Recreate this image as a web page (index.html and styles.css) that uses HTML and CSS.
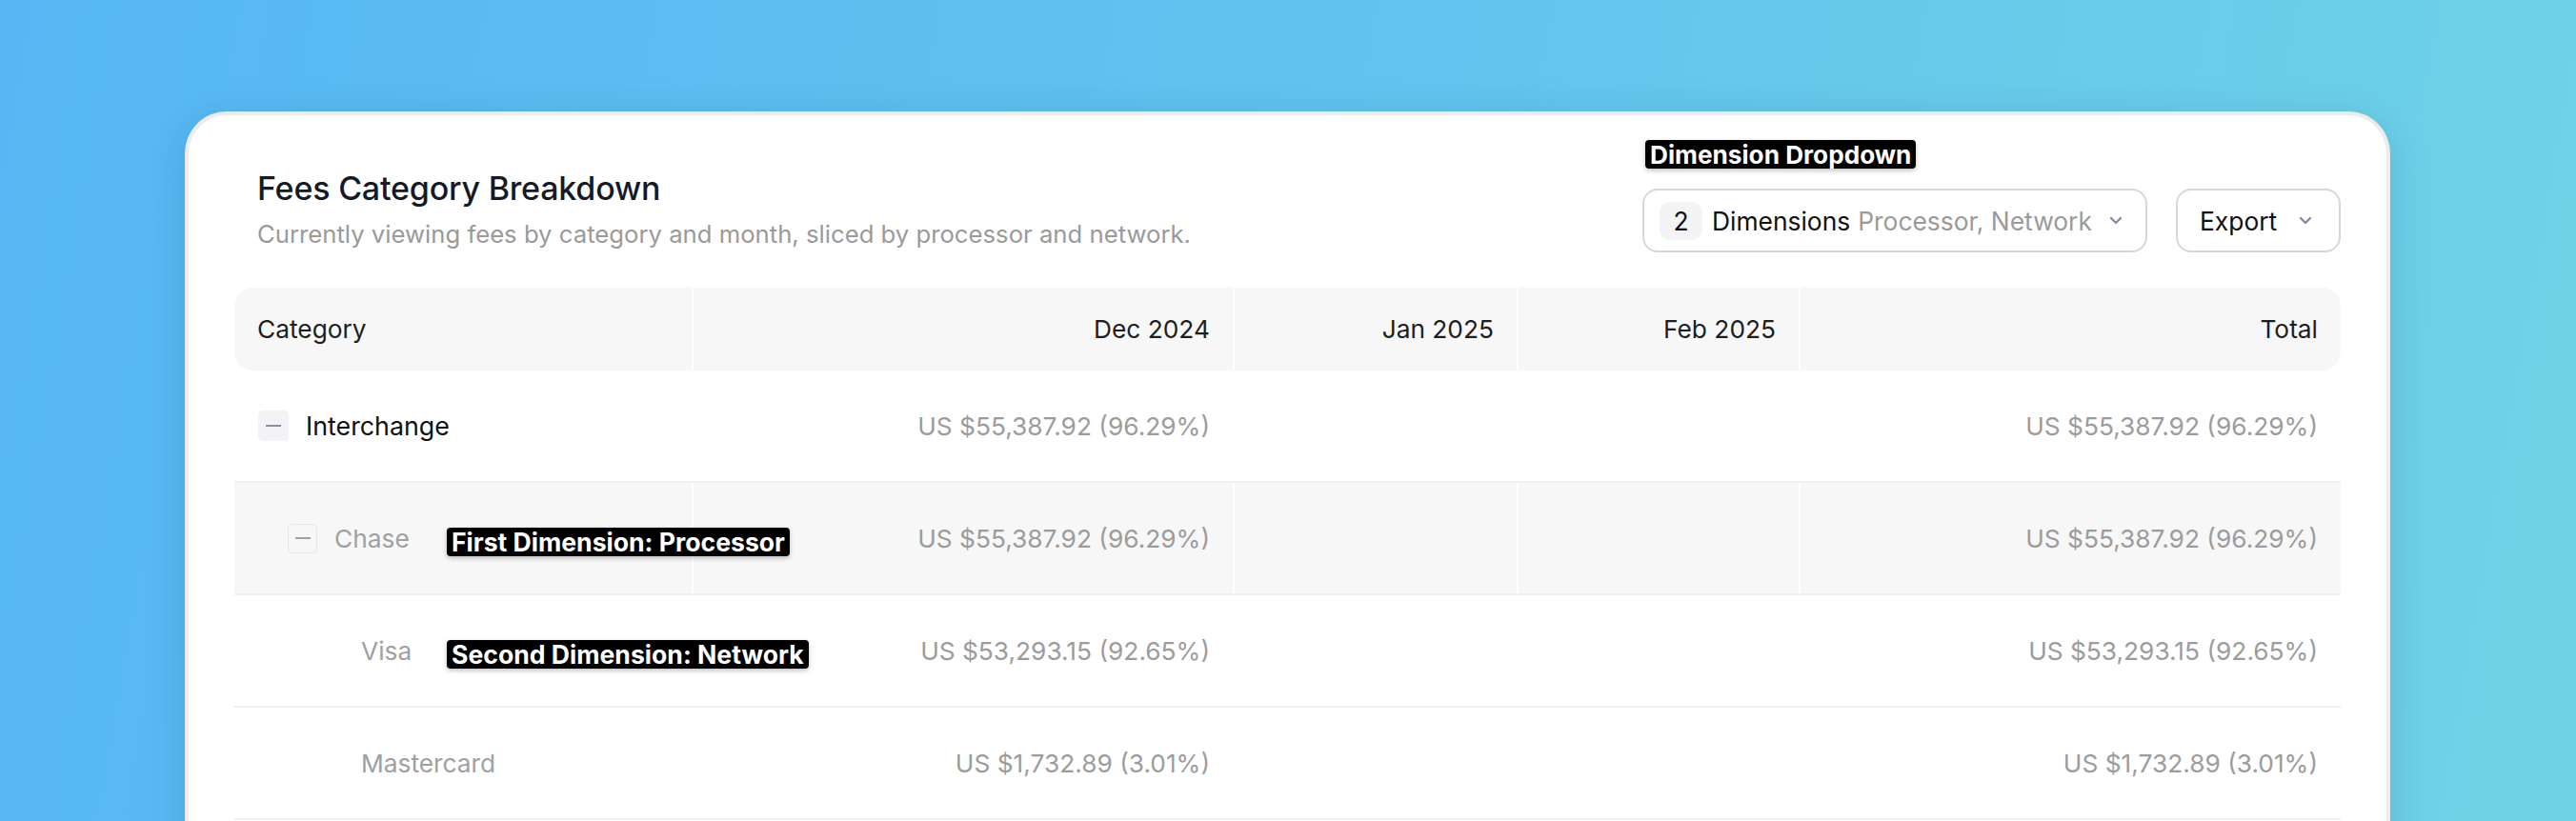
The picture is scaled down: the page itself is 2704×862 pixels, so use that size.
FILE: index.html
```html
<!DOCTYPE html>
<html lang="en">
<head>
<meta charset="utf-8">
<title>Fees Category Breakdown</title>
<link rel="stylesheet" href="styles.css">
</head>
<body>
<div class="stage">
  <section class="card">
    <header class="card-head">
      <div class="titles">
        <h1 class="title">Fees Category Breakdown</h1>
        <p class="subtitle">Currently viewing fees by category and month, sliced by processor and network.</p>
      </div>
      <div class="controls">
        <div class="dropdown-wrap">
          <span class="tag tag-dropdown">Dimension Dropdown</span>
          <button class="btn btn-dims">
            <span class="count">2</span>
            <span class="dims-label">Dimensions</span>
            <span class="dims-value">Processor, Network</span>
            <svg class="chev" width="14" height="9" viewBox="0 0 14 9"><path d="M2 2l5 5 5-5" fill="none" stroke="#8c8aa3" stroke-width="2.4" stroke-linecap="round" stroke-linejoin="round"/></svg>
          </button>
        </div>
        <button class="btn btn-export">
          <span>Export</span>
          <svg class="chev" width="14" height="9" viewBox="0 0 14 9"><path d="M2 2l5 5 5-5" fill="none" stroke="#8c8aa3" stroke-width="2.4" stroke-linecap="round" stroke-linejoin="round"/></svg>
        </button>
      </div>
    </header>

    <div class="table">
      <div class="row row-head">
        <div class="cell">Category</div>
        <div class="cell num">Dec 2024</div>
        <div class="cell num">Jan 2025</div>
        <div class="cell num">Feb 2025</div>
        <div class="cell num">Total</div>
      </div>

      <div class="row">
        <div class="cell cat lvl0">
          <span class="toggle toggle-0"><span class="minus"></span></span>
          <span class="name name-0">Interchange</span>
        </div>
        <div class="cell num val">US $55,387.92 (96.29%)</div>
        <div class="cell num val"></div>
        <div class="cell num val"></div>
        <div class="cell num val">US $55,387.92 (96.29%)</div>
      </div>

      <div class="row row-shaded">
        <div class="cell cat lvl1">
          <span class="toggle toggle-1"><span class="minus"></span></span>
          <span class="name name-sub">Chase</span>
          <span class="tag tag-row">First Dimension: Processor</span>
        </div>
        <div class="cell num val">US $55,387.92 (96.29%)</div>
        <div class="cell num val"></div>
        <div class="cell num val"></div>
        <div class="cell num val">US $55,387.92 (96.29%)</div>
      </div>

      <div class="row">
        <div class="cell cat lvl2">
          <span class="name name-sub">Visa</span>
          <span class="tag tag-row">Second Dimension: Network</span>
        </div>
        <div class="cell num val">US $53,293.15 (92.65%)</div>
        <div class="cell num val"></div>
        <div class="cell num val"></div>
        <div class="cell num val">US $53,293.15 (92.65%)</div>
      </div>

      <div class="row">
        <div class="cell cat lvl2">
          <span class="name name-sub">Mastercard</span>
        </div>
        <div class="cell num val">US $1,732.89 (3.01%)</div>
        <div class="cell num val"></div>
        <div class="cell num val"></div>
        <div class="cell num val">US $1,732.89 (3.01%)</div>
      </div>
    </div>
  </section>
</div>
</body>
</html>
```

FILE: styles.css
```css
* { box-sizing: border-box; }

html, body {
  margin: 0;
  height: 862px;
  overflow: hidden;
}

body {
  font-family: Inter, "Noto Sans", "Liberation Sans", sans-serif;
  background: linear-gradient(100deg, #56b7f4 0%, #62c5ee 55%, #70d3e6 100%);
  color: #111;
}

.stage {
  padding: 117px 0 0 194px;
}

.card {
  width: 2315px;
  min-height: 800px;
  background: #fff;
  border: 4px solid #ececec;
  border-bottom: none;
  border-radius: 44px 44px 0 0;
  box-shadow: 0 8px 40px rgba(20, 60, 100, 0.18);
  padding: 57px 48px 0 48px;
}

.card-head {
  display: flex;
  justify-content: space-between;
  align-items: flex-start;
  padding-left: 24px;
  margin-bottom: 37px;
}

.title {
  margin: 0;
  font-size: 34px;
  line-height: 40px;
  font-weight: 500;
  color: #151a28;
  letter-spacing: -0.2px;
}

.subtitle {
  margin: 12px 0 0;
  font-size: 25.7px;
  line-height: 32px;
  font-weight: 400;
  color: #9a9a9a;
}

.controls {
  display: flex;
  gap: 30px;
  margin-top: 20px;
}

.dropdown-wrap {
  position: relative;
}

.btn {
  display: flex;
  align-items: center;
  height: 67px;
  background: #fff;
  border: 2px solid #d6d6de;
  border-radius: 16px;
  font-family: inherit;
  font-size: 26.4px;
  color: #111;
  cursor: pointer;
}

.btn-dims {
  width: 530px;
  padding: 0 24px 0 16px;
}

.count {
  display: inline-flex;
  align-items: center;
  justify-content: center;
  width: 45px;
  height: 40px;
  border-radius: 11px;
  background: #f4f4f6;
  color: #111;
  margin-right: 10px;
}

.dims-label {
  color: #111;
}

.dims-value {
  color: #9a9a9a;
  margin-left: 8px;
}

.btn .chev {
  margin-left: auto;
  flex: none;
}

.btn-export {
  width: 173px;
  padding: 0 28px 0 23px;
}

/* annotation chips */
.tag {
  position: absolute;
  z-index: 5;
  display: inline-flex;
  align-items: center;
  height: 30px;
  padding: 0 5px;
  background: #000;
  color: #fff;
  font-size: 26.6px;
  font-weight: 700;
  letter-spacing: 0;
  border-radius: 4px;
  box-shadow: 0 2px 5px rgba(0, 0, 0, 0.25);
  white-space: nowrap;
}

.tag-dropdown {
  left: 3px;
  top: -51px;
  font-size: 26.2px;
}

.tag-row {
  left: 223px;
  top: 47px;
}

/* table */
.table {
  width: 100%;
}

.row {
  display: grid;
  grid-template-columns: 480px 568px 298px 296px 1fr;
  height: 118px;
  border-bottom: 2px solid #f0f0f0;
}

.row-head {
  height: 87px;
  background: #f7f7f7;
  border-radius: 20px;
  border-bottom: none;
  color: #1e1e1e;
}

.row-shaded {
  background: #f7f7f7;
}

.cell {
  display: flex;
  align-items: center;
  padding: 0 24px;
  font-size: 26.3px;
  position: relative;
  white-space: nowrap;
}

.cell + .cell {
  border-left: 2px solid #fff;
}

.cell.num {
  justify-content: flex-end;
}

.cell.val {
  color: #9c9c9c;
}

.cat.lvl0 { padding-left: 25px; }
.cat.lvl1 { padding-left: 56px; }
.cat.lvl2 { padding-left: 133px; }

.toggle {
  display: inline-flex;
  align-items: center;
  justify-content: center;
  width: 32px;
  height: 32px;
  border-radius: 5px;
  margin-right: 18px;
  flex: none;
}

.toggle-0 {
  background: #f3f3f6;
}

.toggle-1 {
  width: 31px;
  height: 31px;
  border: 1.5px solid #e6e6ea;
  background: #f7f7f7;
  margin-right: 18px;
}

.minus {
  display: block;
  width: 16px;
  height: 2px;
  background: #8e8ca6;
}

.toggle-1 .minus {
  background: #a2a2a2;
}

.name-0 {
  color: #111;
  font-size: 26.8px;
}

.name-sub {
  color: #a0a0a0;
}
```
